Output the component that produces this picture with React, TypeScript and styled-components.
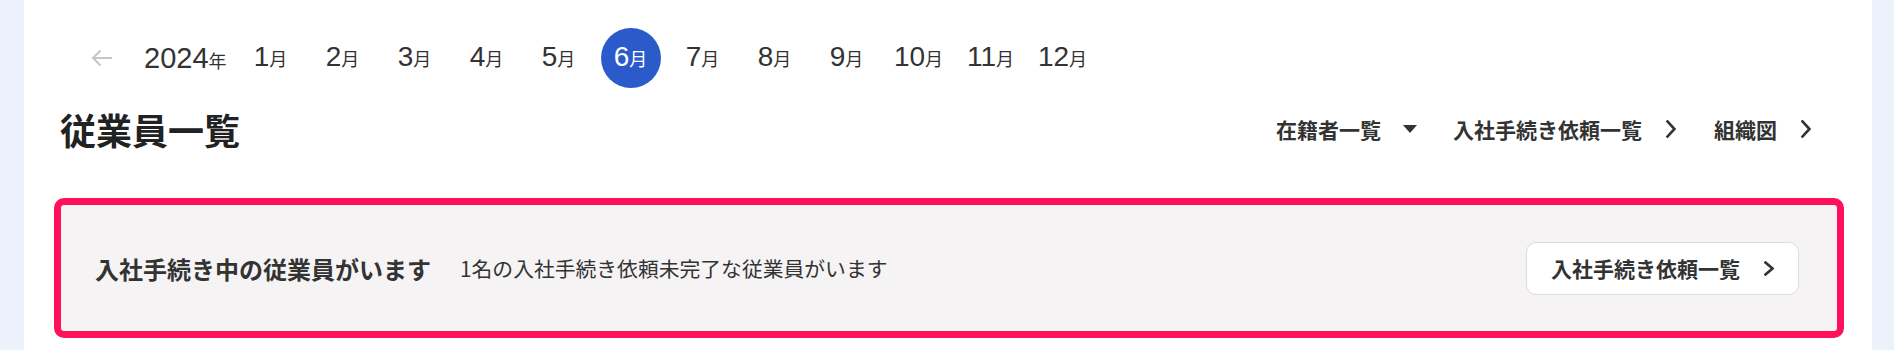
import { createGlobalStyle, styled } from "styled-components";

const GlobalStyle = createGlobalStyle`
  body {
    margin: 0;
    background-color: #ecf2fc;
    font-family: "Noto Sans CJK JP", "Noto Sans", sans-serif;
    color: #333;
  }
`;

const Page = styled.div`
  margin: 0 22px 0 24px;
  height: 350px;
  background-color: #fff;
  padding: 0 28px 0 30px;
  box-sizing: border-box;
  overflow: hidden;
`;

const MonthNav = styled.div`
  display: flex;
  align-items: center;
  gap: 12px;
  padding-top: 28px;
  margin-left: 18px;
  font-family: "Liberation Sans", "Noto Sans CJK JP", sans-serif;
  color: #333;
`;

const ArrowButton = styled.button`
  width: 60px;
  height: 60px;
  border: none;
  background: none;
  padding: 0;
  display: flex;
  align-items: center;
  justify-content: center;
  cursor: pointer;
`;

const Year = styled.div`
  font-size: 29px;
  line-height: 1;
  margin-right: 2px;
  small {
    font-size: 18px;
    font-family: "Noto Sans CJK JP", sans-serif;
  }
`;

const Month = styled.button<{ $active?: boolean }>`
  width: 60px;
  height: 60px;
  border: none;
  padding: 0;
  border-radius: 50%;
  display: flex;
  align-items: baseline;
  justify-content: center;
  padding-top: 15px;
  box-sizing: border-box;
  font-family: inherit;
  font-size: 28px;
  line-height: 1;
  cursor: pointer;
  background-color: ${({ $active }) => ($active ? "#2b5bca" : "transparent")};
  color: ${({ $active }) => ($active ? "#fff" : "#333")};
  small {
    font-size: 18px;
    font-family: "Noto Sans CJK JP", sans-serif;
  }
`;

const Header = styled.div`
  display: flex;
  align-items: center;
  justify-content: space-between;
  margin-top: 16px;
  padding: 0 26px 0 6px;
`;

const Title = styled.h1`
  margin: 0;
  font-size: 36px;
  line-height: 50px;
  font-weight: 700;
  color: #222;
`;

const Links = styled.nav`
  display: flex;
  align-items: center;
  gap: 31px;
`;

const NavLink = styled.a`
  display: flex;
  align-items: center;
  gap: 17px;
  font-size: 21px;
  font-weight: 700;
  color: #333;
  text-decoration: none;
  cursor: pointer;
`;

const IconBox = styled.span`
  width: 24px;
  height: 24px;
  display: flex;
  align-items: center;
  justify-content: center;
`;

const Banner = styled.section`
  margin-top: 44px;
  height: 140px;
  box-sizing: border-box;
  border: 7px solid #ff105a;
  border-radius: 10px;
  background-color: #f5f3f4;
  display: flex;
  align-items: center;
  padding: 0 38px 0 34px;
`;

const BannerTitle = styled.strong`
  font-size: 24px;
  font-weight: 700;
  color: #333;
`;

const BannerText = styled.span`
  margin-left: 29px;
  font-size: 20.8px;
  color: #333;
  flex: 1;
`;

const BannerButton = styled.button`
  display: flex;
  align-items: center;
  gap: 17px;
  height: 53px;
  padding: 0 17px 0 24px;
  border: 1px solid #dcdcdc;
  border-radius: 10px;
  background-color: #fff;
  font-family: inherit;
  font-size: 21px;
  font-weight: 700;
  color: #333;
  cursor: pointer;
`;

const Chevron = ({ h = 18 }: { h?: number }) => (
  <svg width="10" height={h} viewBox={`0 0 10 ${h}`} fill="none">
    <polyline
      points={`1.5,1.5 8.5,${h / 2} 1.5,${h - 1.5}`}
      stroke="#333"
      strokeWidth="2.6"
      strokeLinecap="square"
    />
  </svg>
);

const months = [1, 2, 3, 4, 5, 6, 7, 8, 9, 10, 11, 12];

function App() {
  const current = 6;
  return (
    <>
      <GlobalStyle />
      <Page>
        <MonthNav>
          <ArrowButton aria-label="前の年">
            <svg width="22" height="18" viewBox="0 0 22 18" fill="none">
              <path
                d="M21 9H2M9.5 1.5L2 9l7.5 7.5"
                stroke="#c6c6c6"
                strokeWidth="2"
              />
            </svg>
          </ArrowButton>
          <Year>
            2024<small>年</small>
          </Year>
          {months.map((m) => (
            <Month key={m} $active={m === current}>
              {m}
              <small>月</small>
            </Month>
          ))}
        </MonthNav>
        <Header>
          <Title>従業員一覧</Title>
          <Links>
            <NavLink>
              在籍者一覧
              <IconBox>
                <svg width="14" height="8" viewBox="0 0 14 8">
                  <polygon points="0,0 14,0 7,8" fill="#333" />
                </svg>
              </IconBox>
            </NavLink>
            <NavLink>
              入社手続き依頼一覧
              <IconBox>
                <Chevron />
              </IconBox>
            </NavLink>
            <NavLink>
              組織図
              <IconBox>
                <Chevron />
              </IconBox>
            </NavLink>
          </Links>
        </Header>
        <Banner>
          <BannerTitle>入社手続き中の従業員がいます</BannerTitle>
          <BannerText>1名の入社手続き依頼未完了な従業員がいます</BannerText>
          <BannerButton>
            入社手続き依頼一覧
            <IconBox>
              <Chevron h={15} />
            </IconBox>
          </BannerButton>
        </Banner>
      </Page>
    </>
  );
}

export default App;
